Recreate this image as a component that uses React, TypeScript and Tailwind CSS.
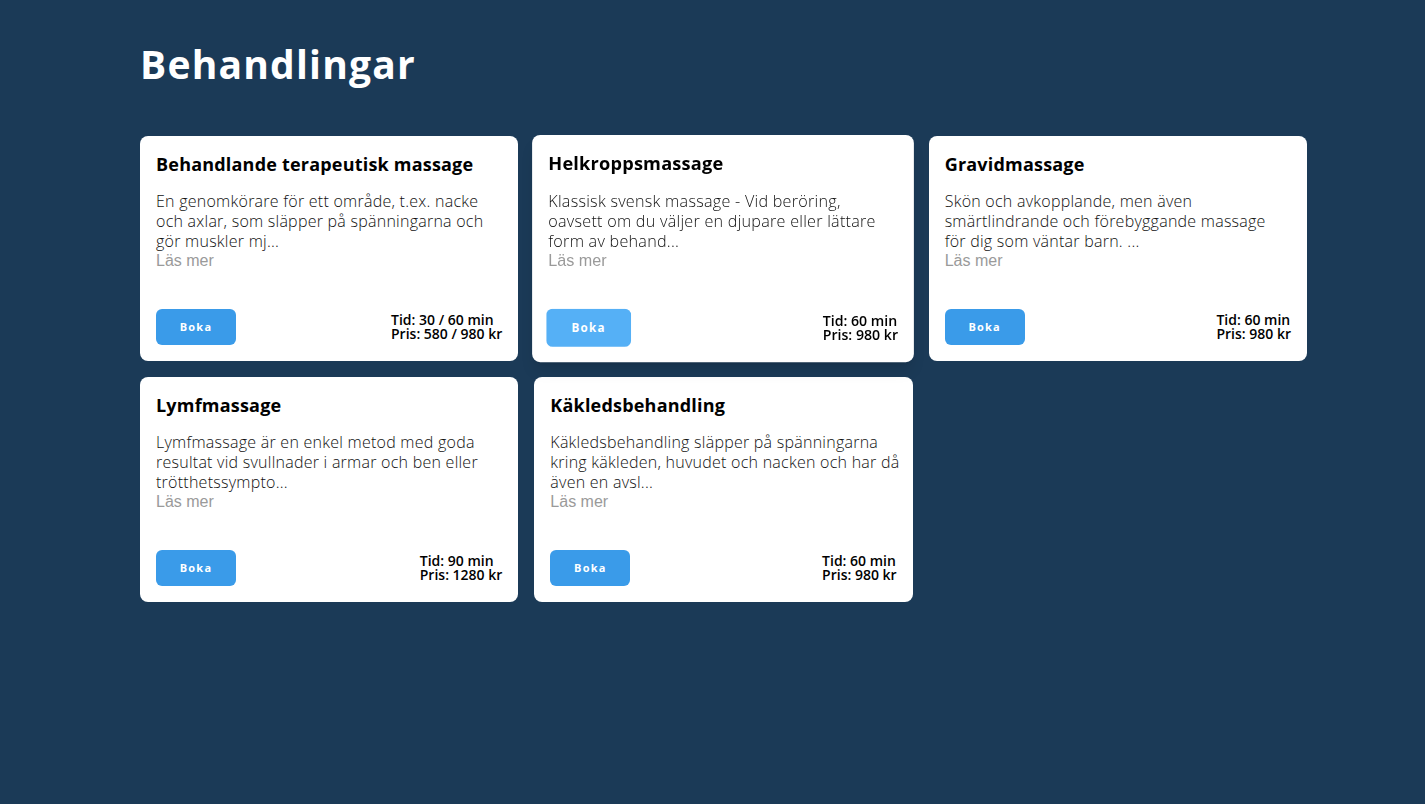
import React from "react";

type Item = {
  title: string;
  lines: string[];
  tid: string;
  pris: string;
  hover?: boolean;
};

const items: Item[] = [
  {
    title: "Behandlande terapeutisk massage",
    lines: [
      "En genomkörare för ett område, t.ex. nacke",
      "och axlar, som släpper på spänningarna och",
      "gör muskler mj...",
    ],
    tid: "Tid: 30 / 60 min",
    pris: "Pris: 580 / 980 kr",
  },
  {
    title: "Helkroppsmassage",
    lines: [
      "Klassisk svensk massage - Vid beröring,",
      "oavsett om du väljer en djupare eller lättare",
      "form av behand...",
    ],
    tid: "Tid: 60 min",
    pris: "Pris: 980 kr",
    hover: true,
  },
  {
    title: "Gravidmassage",
    lines: [
      "Skön och avkopplande, men även",
      "smärtlindrande och förebyggande massage",
      "för dig som väntar barn. ...",
    ],
    tid: "Tid: 60 min",
    pris: "Pris: 980 kr",
  },
  {
    title: "Lymfmassage",
    lines: [
      "Lymfmassage är en enkel metod med goda",
      "resultat vid svullnader i armar och ben eller",
      "trötthetssympto...",
    ],
    tid: "Tid: 90 min",
    pris: "Pris: 1280 kr",
  },
  {
    title: "Käkledsbehandling",
    lines: [
      "Käkledsbehandling släpper på spänningarna",
      "kring käkleden, huvudet och nacken och har då",
      "även en avsl...",
    ],
    tid: "Tid: 60 min",
    pris: "Pris: 980 kr",
  },
];

const font = { fontFamily: '"Open Sans", "Noto Sans", sans-serif' };

function Card({ item }: { item: Item }) {
  return (
    <div
      className={
        "bg-white rounded-lg p-4 flex flex-col h-[225px] " +
        (item.hover ? "scale-[1.01] shadow-lg" : "")
      }
    >
      <h3 className="text-[18px] leading-6 font-bold text-black tracking-[0.2px]">
        {item.title}
      </h3>
      <p className="mt-[15px] text-[16px] leading-5 font-light text-[#111] tracking-[0.25px]">
        {item.lines.map((l, i) => (
          <span key={i} className="block whitespace-nowrap">
            {l}
          </span>
        ))}
      </p>
      <span
        className="block text-[16px] leading-5 text-[#9a9a9a]"
        style={{ fontFamily: '"Liberation Sans", Arial, sans-serif' }}
      >
        Läs mer
      </span>
      <div className="mt-auto flex items-center justify-between">
        <button
          className={
            "w-20 h-9 rounded-md text-[11px] font-bold tracking-[1.2px] text-white " +
            (item.hover ? "bg-[#55b0f6] scale-105" : "bg-[#3a9be9]")
          }
        >
          Boka
        </button>
        <div className="text-[14px] leading-[14px] font-semibold text-black">
          <div>{item.tid}</div>
          <div>{item.pris}</div>
        </div>
      </div>
    </div>
  );
}

export default function App() {
  return (
    <div className="min-h-[804px] w-full bg-[#1b3a57] pl-[140px] pt-[40px]" style={font}>
      <h1 className="text-[39px] leading-[48px] font-bold text-white tracking-[1.2px]">
        Behandlingar
      </h1>
      <div className="mt-[48px] w-[1167px] grid grid-cols-3 gap-4">
        {items.map((it, i) => (
          <Card key={i} item={it} />
        ))}
      </div>
    </div>
  );
}
